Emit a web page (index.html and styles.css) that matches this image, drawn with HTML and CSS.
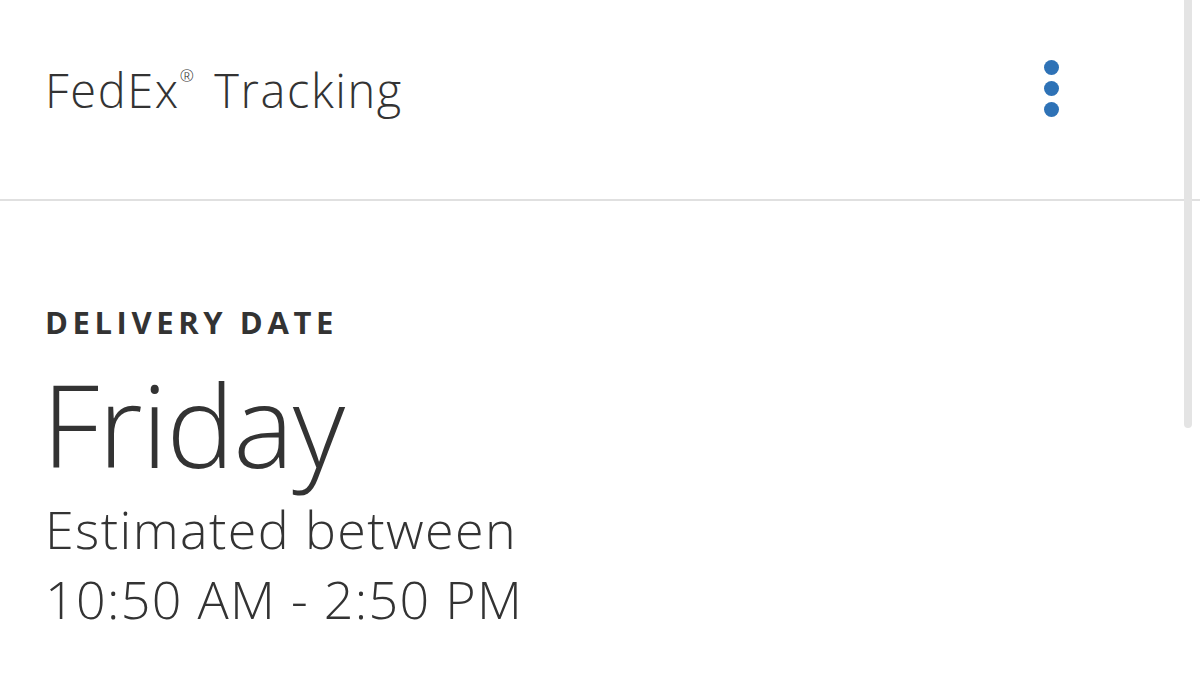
FILE: index.html
```html
<!DOCTYPE html>
<html>
<head>
<meta charset="utf-8">
<link rel="stylesheet" href="styles.css">
</head>
<body>
<div class="page">
  <header class="topbar">
    <h1 class="title">FedEx<sup class="reg">®</sup> Tracking</h1>
    <button class="menu" aria-label="More">
      <span class="dot"></span><span class="dot"></span><span class="dot"></span>
    </button>
  </header>
  <main class="content">
    <div class="label">DELIVERY DATE</div>
    <div class="day">Friday</div>
    <div class="estimate">
      <div class="est-line1">Estimated between</div>
      <div class="est-line2">10:50 AM - 2:50 PM</div>
    </div>
  </main>
  <div class="scrollbar"></div>
</div>
</body>
</html>
```
FILE: styles.css
```css
* { box-sizing: border-box; }
html, body { margin: 0; padding: 0; background: #fff; }
body { font-family: "Open Sans", "Lato", sans-serif; color: #333; }
.page { position: relative; width: 1200px; height: 699px; overflow: hidden; }
.topbar {
  height: 201px;
  border-bottom: 2px solid #e0e0e0;
  display: flex;
  align-items: flex-start;
  justify-content: space-between;
  padding: 0 0 0 45px;
}
.title {
  margin: 58px 0 0 0;
  font-weight: 300;
  font-size: 47px;
  line-height: 64px;
  color: #333;
  letter-spacing: 1.6px;
}
.reg { font-size: 17px; vertical-align: top; position: relative; top: -14px; margin-left: 0; margin-right: 5px; }
.menu {
  margin: 60px 141px 0 0;
  border: 0; background: none; padding: 0;
  display: flex; flex-direction: column; gap: 6px;
}
.dot { width: 15px; height: 15px; border-radius: 50%; background: #2e72b6; display: block; }
.content { padding: 0 0 0 45px; }
.label {
  margin-top: 101px;
  font-weight: 700;
  font-size: 31px;
  letter-spacing: 4.6px;
  line-height: 40px;
  color: #333;
}
.day {
  margin-top: 22px;
  font-weight: 300;
  font-size: 114px;
  line-height: 120px;
  letter-spacing: -1px;
  margin-left: -3px;
}
.estimate {
  font-weight: 300;
  font-size: 52px;
  line-height: 70px;
  margin-top: 10px;
}
.est-line1 { letter-spacing: 1.4px; }
.est-line2 { letter-spacing: 1.3px; }
.scrollbar {
  position: absolute;
  top: 0; right: 8px;
  width: 8px; height: 428px;
  background: #e4e4e4;
  border-radius: 0 0 4px 4px;
}
```
